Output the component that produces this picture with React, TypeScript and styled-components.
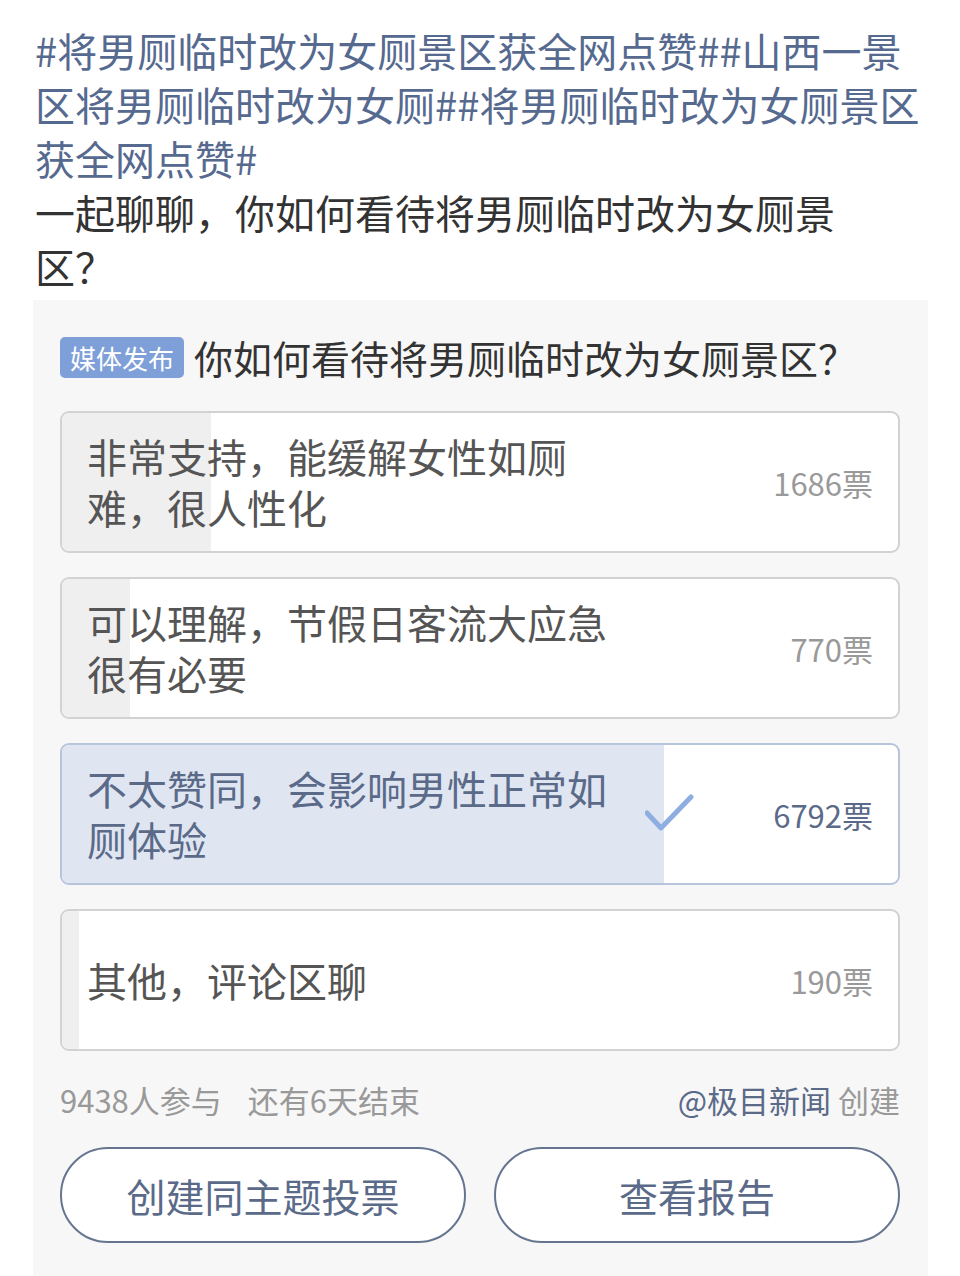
import { createGlobalStyle, styled } from "styled-components";

const GlobalStyle = createGlobalStyle`
  html, body {
    margin: 0;
    padding: 0;
    background: #ffffff;
  }
  body {
    font-family: "Noto Sans CJK SC", "Noto Sans", sans-serif;
  }
`;

const Page = styled.div`
  width: 960px;
  height: 1276px;
  box-sizing: border-box;
  padding: 23px 32px 0 33px;
  overflow: hidden;
`;

const Post = styled.div`
  padding-left: 2px;
  font-size: 40px;
  line-height: 54px;
  color: #333333;
`;

const Topics = styled.div`
  color: #56698f;
  word-break: break-all;
`;

const Ask = styled.div`
  max-width: 820px;
`;

const Card = styled.div`
  margin-top: 7px;
  background: #f7f7f7;
  padding: 30px 28px 0 27px;
  height: 976px;
  box-sizing: border-box;
`;

const Header = styled.div`
  display: flex;
  align-items: center;
  gap: 10px;
  height: 54px;
`;

const Tag = styled.span`
  background: #7f9fd9;
  color: #ffffff;
  font-size: 26px;
  line-height: 41px;
  padding: 0 10px;
  border-radius: 5px;
`;

const QTitle = styled.span`
  font-size: 39px;
  color: #333333;
`;

const Options = styled.div`
  margin-top: 27px;
  display: flex;
  flex-direction: column;
  gap: 24px;
`;

const Option = styled.div<{ $picked?: boolean }>`
  position: relative;
  height: 142px;
  box-sizing: border-box;
  border: 2px solid ${(p) => (p.$picked ? "#b7c5dc" : "#d2d2d2")};
  border-radius: 9px;
  background: #ffffff;
  overflow: hidden;
`;

const Fill = styled.div<{ $picked?: boolean }>`
  position: absolute;
  left: 0;
  top: 0;
  bottom: 0;
  background: ${(p) => (p.$picked ? "#dfe6f2" : "#efefef")};
`;

const Row = styled.div`
  position: relative;
  height: 100%;
  display: flex;
  align-items: center;
  padding: 0 25px;
`;

const Label = styled.div<{ $picked?: boolean }>`
  width: 540px;
  font-size: 40px;
  line-height: 51px;
  color: ${(p) => (p.$picked ? "#5a6a88" : "#555555")};
`;

const Check = styled.svg`
  margin-left: 18px;
  width: 50px;
  height: 40px;
`;

const Count = styled.div<{ $picked?: boolean }>`
  margin-left: auto;
  font-size: 31px;
  color: ${(p) => (p.$picked ? "#5a6a88" : "#999999")};
`;

const Footer = styled.div`
  margin-top: 29px;
  display: flex;
  justify-content: space-between;
  align-items: center;
  font-size: 31px;
  line-height: 40px;
  color: #999999;
`;

const Stats = styled.span`
  display: flex;
  gap: 26px;
`;

const Author = styled.span`
  color: #5a6a88;
`;

const Buttons = styled.div`
  margin-top: 27px;
  display: flex;
  gap: 28px;
`;

const Button = styled.button`
  flex: 1;
  height: 96px;
  border: 2px solid #66758f;
  border-radius: 48px;
  background: #ffffff;
  font-family: inherit;
  font-size: 39px;
  color: #5a6a88;
`;

const options = [
  { text: "非常支持，能缓解女性如厕难，很人性化", votes: 1686 },
  { text: "可以理解，节假日客流大应急很有必要", votes: 770 },
  { text: "不太赞同，会影响男性正常如厕体验", votes: 6792, picked: true },
  { text: "其他，评论区聊", votes: 190 },
];

const total = 9438;

export default function App() {
  return (
    <Page>
      <GlobalStyle />
      <Post>
        <Topics>
          #将男厕临时改为女厕景区获全网点赞##山西一景区将男厕临时改为女厕##将男厕临时改为女厕景区获全网点赞#
        </Topics>
        <Ask>一起聊聊，你如何看待将男厕临时改为女厕景区？</Ask>
      </Post>
      <Card>
        <Header>
          <Tag>媒体发布</Tag>
          <QTitle>你如何看待将男厕临时改为女厕景区？</QTitle>
        </Header>
        <Options>
          {options.map((o) => (
            <Option key={o.text} $picked={o.picked}>
              <Fill $picked={o.picked} style={{ width: `${(o.votes / total) * 100}%` }} />
              <Row>
                <Label $picked={o.picked}>{o.text}</Label>
                {o.picked && (
                  <Check viewBox="0 0 50 40">
                    <path d="M2 19 L16 34 L46 3" fill="none" stroke="#8eaee2" strokeWidth="5" strokeLinecap="round" strokeLinejoin="round" />
                  </Check>
                )}
                <Count $picked={o.picked}>{o.votes}票</Count>
              </Row>
            </Option>
          ))}
        </Options>
        <Footer>
          <Stats>
            <span>9438人参与</span>
            <span>还有6天结束</span>
          </Stats>
          <span>
            <Author>@极目新闻</Author> 创建
          </span>
        </Footer>
        <Buttons>
          <Button>创建同主题投票</Button>
          <Button>查看报告</Button>
        </Buttons>
      </Card>
    </Page>
  );
}
